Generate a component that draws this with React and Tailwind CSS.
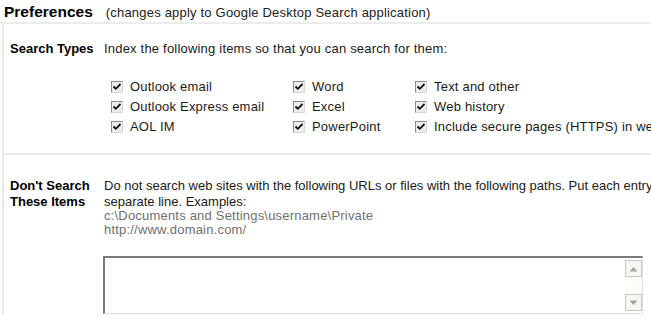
import React from 'react';

const columns = [
  ['Outlook email', 'Outlook Express email', 'AOL IM'],
  ['Word', 'Excel', 'PowerPoint'],
  ['Text and other', 'Web history', 'Include secure pages (HTTPS) in web history'],
];
const colWidths = ['w-[182px]', 'w-[122px]', 'w-[300px]'];

function Check({ label }) {
  return (
    <div className="flex h-[20px] items-center whitespace-nowrap">
      <span className="flex h-[12px] w-[12px] shrink-0 items-center justify-center border-t border-l border-r border-b border-t-[#8c8c8c] border-l-[#8c8c8c] border-r-[#d8d8d8] border-b-[#d8d8d8] bg-[#ececec]">
        <svg width="10" height="10" viewBox="0 0 10 10">
          <path d="M1.5 4.5 L3.8 6.8 L8.5 2" fill="none" stroke="#111" strokeWidth="1.8" />
        </svg>
      </span>
      <span className="ml-[7px]">{label}</span>
    </div>
  );
}

function ScrollButton({ up }) {
  return (
    <div className="flex h-[17px] w-[17px] items-center justify-center border border-[#c9c9c0] bg-[#f7f7f2]">
      <svg width="9" height="6" viewBox="0 0 9 6">
        <path d={up ? 'M0.5 5.5 L4.5 1 L8.5 5.5 Z' : 'M0.5 0.5 L4.5 5 L8.5 0.5 Z'} fill="#a3a39a" />
      </svg>
    </div>
  );
}

export default function App() {
  return (
    <div className="h-[319px] w-[651px] overflow-hidden bg-white font-['Liberation_Sans',Arial,sans-serif] text-[13px] tracking-[0.2px] text-[#1a1a1a]">
      {/* title bar */}
      <div className="flex h-[24px] items-baseline border-b-2 border-[#ececec] pl-[4px] pt-[3px] whitespace-nowrap">
        <span className="text-[15.5px] font-bold leading-[18px] tracking-normal text-black">Preferences</span>
        <span className="ml-[13px] text-[#222]">(changes apply to Google Desktop Search application)</span>
      </div>

      <div className="ml-[2px] border-l-2 border-[#e8e8e8]">
        {/* search types */}
        <div className="flex border-b-2 border-[#ececec] pb-[16px] pt-[17px] pl-[6px]">
          <div className="w-[94px] shrink-0 font-bold leading-[15px] tracking-normal text-black">Search Types</div>
          <div className="min-w-0">
            <div className="leading-[15px] whitespace-nowrap">Index the following items so that you can search for them:</div>
            <div className="mt-[21px] ml-[7px] flex">
              {columns.map((col, i) => (
                <div key={i} className={`${colWidths[i]} shrink-0`}>
                  {col.map((label) => (
                    <Check key={label} label={label} />
                  ))}
                </div>
              ))}
            </div>
          </div>
        </div>

        {/* don't search */}
        <div className="flex pt-[23px] pl-[6px]">
          <div className="w-[94px] shrink-0 font-bold leading-[16px] tracking-normal text-black">
            Don't Search
            <br />
            These Items
          </div>
          <div className="min-w-0 flex-1">
            <div className="leading-[16px] tracking-normal whitespace-nowrap">
              Do not search web sites with the following URLs or files with the following paths. Put each entry on a
              <br />
              separate line. Examples:
            </div>
            <div className="-mt-px leading-[14px] text-[#707070] whitespace-nowrap">
              c:\Documents and Settings\username\Private
              <br />
              http://www.domain.com/
            </div>
            <div className="mt-[19px] -ml-px flex h-[58px] w-[540px] border-t-2 border-l-2 border-r border-b border-t-[#7a7a7a] border-l-[#7a7a7a] border-r-[#e2e2e2] border-b-[#e2e2e2] bg-white">
              <div className="flex-1" />
              <div className="flex w-[17px] flex-col justify-between py-[2px]">
                <ScrollButton up />
                <div className="flex-1 bg-[#fbfbf8]" />
                <ScrollButton />
              </div>
            </div>
          </div>
        </div>
      </div>
    </div>
  );
}
